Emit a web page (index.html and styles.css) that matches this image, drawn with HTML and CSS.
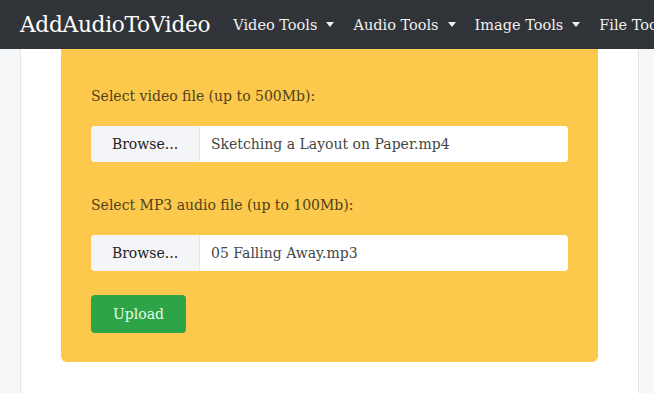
FILE: index.html
```html
<!DOCTYPE html>
<html lang="en">
<head>
    <meta charset="UTF-8">
    <meta name="viewport" content="width=device-width, initial-scale=1.0">
    <title>AddAudioToVideo</title>
    <link rel="stylesheet" href="styles.css">
</head>
<body>
    <nav class="navbar">
        <a class="brand" href="#">AddAudioToVideo</a>
        <ul class="nav-menu">
            <li class="nav-item">Video Tools <span class="caret"></span></li>
            <li class="nav-item">Audio Tools <span class="caret"></span></li>
            <li class="nav-item">Image Tools <span class="caret"></span></li>
            <li class="nav-item">File Tools <span class="caret"></span></li>
        </ul>
    </nav>

    <div class="page">
        <div class="card">
            <form class="upload-box">
                <label class="field-label">Select video file (up to 500Mb):</label>
                <div class="file-group">
                    <span class="browse">Browse...</span>
                    <span class="file-name">Sketching a Layout on Paper.mp4</span>
                </div>

                <label class="field-label">Select MP3 audio file (up to 100Mb):</label>
                <div class="file-group">
                    <span class="browse">Browse...</span>
                    <span class="file-name">05 Falling Away.mp3</span>
                </div>

                <button type="button" class="btn-upload">Upload</button>
            </form>
        </div>
    </div>
</body>
</html>
```

FILE: styles.css
```css
:root {
    --nav-dark: #303338;
    --warning-yellow: #fdc94d;
    --label-brown: #4f421c;
    --success-green: #2ca447;
    --page-grey: #f5f7f9;
}

body {
    margin: 0;
    height: 393px;
    overflow: hidden;
    background: var(--page-grey);
    font-family: 'DejaVu Serif', serif;
    display: flex;
    flex-direction: column;
}

.navbar {
    height: 49px;
    background: var(--nav-dark);
    display: flex;
    align-items: center;
    padding-left: 20px;
    white-space: nowrap;
    overflow: hidden;
    flex-shrink: 0;
}

.brand {
    color: #fff;
    text-decoration: none;
    font-size: 21.7px;
    margin-right: 23px;
    letter-spacing: -0.3px;
}

.nav-menu {
    display: flex;
    gap: 19px;
    margin: 0;
    padding: 0;
    list-style: none;
}

.nav-item {
    color: #f0f0f0;
    font-size: 14.5px;
    display: flex;
    align-items: center;
}

.caret {
    display: inline-block;
    margin-left: 9px;
    border-top: 5px solid #f0f0f0;
    border-left: 4px solid transparent;
    border-right: 4px solid transparent;
}

.page {
    flex: 1;
    padding: 0 15px 0 20px;
}

.card {
    height: 100%;
    background: #fff;
    border-left: 1px solid #e3e6ea;
    border-right: 1px solid #e3e6ea;
    padding: 0 40px;
}

.upload-box {
    background: var(--warning-yellow);
    border-radius: 0 0 6px 6px;
    padding: 39px 30px 29px;
    display: flex;
    flex-direction: column;
    align-items: flex-start;
}

.field-label {
    color: var(--label-brown);
    font-size: 14px;
    margin-bottom: 22px;
}

.file-group {
    align-self: stretch;
    display: flex;
    height: 36px;
    margin-bottom: 35px;
    background: #fff;
    border-radius: 4px;
    overflow: hidden;
    font-size: 14px;
}

.browse {
    width: 108px;
    background: #f3f5f8;
    border-right: 1px solid #e6e8ec;
    color: #222;
    display: flex;
    align-items: center;
    justify-content: center;
}

.file-name {
    padding-left: 11px;
    color: #454545;
    display: flex;
    align-items: center;
}

.file-group:last-of-type {
    margin-bottom: 24px;
}

.btn-upload {
    width: 95px;
    height: 38px;
    background: var(--success-green);
    border: none;
    border-radius: 4px;
    color: #e8fbe9;
    font-family: inherit;
    font-size: 14px;
}
```
